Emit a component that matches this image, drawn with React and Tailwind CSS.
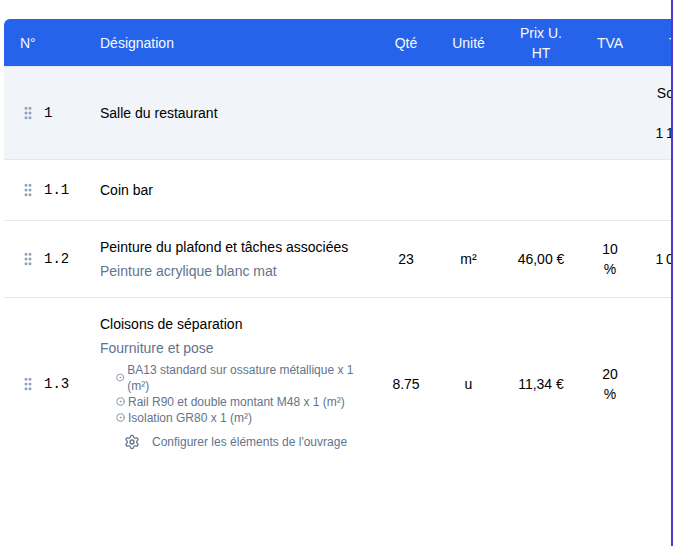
import { CircleDot, GripVertical, Settings } from "lucide-react";

const columns = [
  { label: "N°", className: "w-20 px-4 text-left" },
  { label: "Désignation", className: "w-[292px] px-4 text-left" },
  { label: "Qté", className: "w-[60px] px-4 text-center" },
  { label: "Unité", className: "w-[65px] px-4 text-center" },
  { label: "Prix U. HT", className: "w-20 px-4 text-center" },
  { label: "TVA", className: "w-[58px] px-4 text-center" },
  { label: "Total", className: "w-[98px] pl-[30px] text-left" },
];

const items = [
  { number: "1.1", title: "Coin bar" },
  {
    number: "1.2",
    title: "Peinture du plafond et tâches associées",
    description: "Peinture acrylique blanc mat",
    quantity: "23",
    unit: "m²",
    price: "46,00 €",
    vat: "10 %",
    total: "1\u202f058,00\u00a0€",
  },
  {
    number: "1.3",
    title: "Cloisons de séparation",
    description: "Fourniture et pose",
    parts: [
      "BA13 standard sur ossature métallique x 1 (m²)",
      "Rail R90 et double montant M48 x 1 (m²)",
      "Isolation GR80 x 1 (m²)",
    ],
    quantity: "8.75",
    unit: "u",
    price: "11,34 €",
    vat: "20 %",
  },
];

function NumberCell({ number }) {
  return (
    <td className="py-4 pl-4">
      <div className="flex h-7 items-center gap-2">
        <button type="button" aria-label={`Déplacer ${number}`} className="cursor-grab text-slate-400">
          <GripVertical className="size-4" strokeWidth={2.5} />
        </button>
        <span className="font-['Liberation_Mono',monospace]">{number}</span>
      </div>
    </td>
  );
}

function PartsList({ parts }) {
  return (
    <>
      <ul className="mt-1 pl-4 text-xs">
        {parts.map((part) => (
          <li key={part} className="flex items-center gap-[3px]">
            <CircleDot className="h-[9px] w-[9px]" />
            {part}
          </li>
        ))}
      </ul>
      <button type="button" className="mt-1 ml-6 flex h-6 items-center gap-3 text-xs">
        <Settings className="size-4" />
        Configurer les éléments de l'ouvrage
      </button>
    </>
  );
}

function ItemRow({ item }) {
  return (
    <tr className="border-b border-gray-200 last:border-b-0">
      <NumberCell number={item.number} />
      <td className="p-4">
        <p>{item.title}</p>
        <div className="text-slate-500">
          {item.description && <p className="mt-1">{item.description}</p>}
          {item.parts && <PartsList parts={item.parts} />}
        </div>
      </td>
      <td className="px-4 text-center">{item.quantity}</td>
      <td className="px-4 text-center">{item.unit}</td>
      <td className="px-4 text-center whitespace-nowrap">{item.price}</td>
      <td className="px-4 text-center">{item.vat}</td>
      <td className="px-4 text-center whitespace-nowrap">{item.total}</td>
    </tr>
  );
}

export default function App() {
  return (
    <main className="min-h-screen overflow-hidden border-r-2 border-[#4f39c8] bg-white pt-[19px] pl-1 font-['Liberation_Sans',Arial,sans-serif] text-sm text-black">
      <div className="overflow-hidden rounded-tl-md">
        <table className="w-[733px] table-fixed">
          <thead className="bg-[#2563eb] text-slate-50">
            <tr className="h-[47px] border-b border-gray-200">
              {columns.map((column) => (
                <th key={column.label} scope="col" className={`pt-0.5 font-normal ${column.className}`}>
                  {column.label}
                </th>
              ))}
            </tr>
          </thead>
          <tbody>
            <tr className="border-b border-gray-200 bg-slate-100">
              <NumberCell number="1" />
              <td className="p-4" colSpan={5}>Salle du restaurant</td>
              <td className="p-4 text-center whitespace-nowrap">
                <p>Sous total</p>
                <p>:</p>
                <p>{"1\u202f157,23\u00a0€"}</p>
              </td>
            </tr>
            {items.map((item) => (
              <ItemRow key={item.number} item={item} />
            ))}
          </tbody>
        </table>
      </div>
    </main>
  );
}
